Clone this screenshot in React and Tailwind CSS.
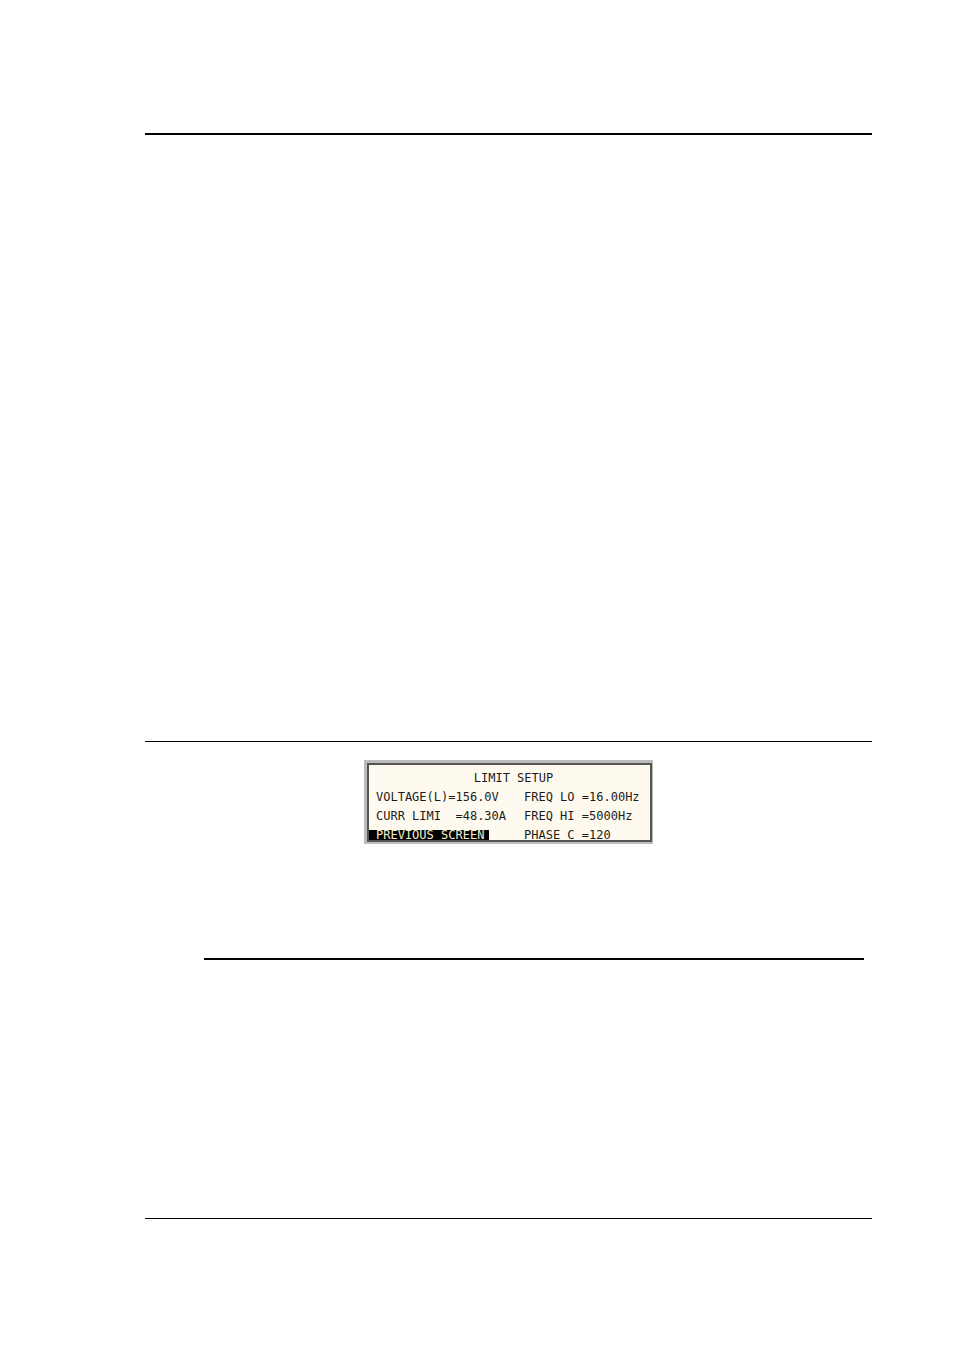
const rows = [
  ["VOLTAGE(L)=156.0V", "FREQ LO =16.00Hz"],
  ["CURR LIMI  =48.30A", "FREQ HI =5000Hz"],
];

function LimitSetup() {
  return (
    <section
      aria-labelledby="limit-title"
      className="mx-auto mt-[18px] w-[289px] bg-[#bbbcbb] pt-[3px] pr-px pb-[2px] pl-[3px] font-['DejaVu_Sans_Mono','Liberation_Mono',monospace] text-[12px] whitespace-pre text-[#1c1c1a]"
    >
      <div className="border-2 border-[#555653] bg-[#fffaf0] pt-1">
        <h1 id="limit-title" className="pl-2 text-center leading-[19px]">LIMIT SETUP</h1>
        {rows.map(([left, right]) => (
          <div key={left} className="flex leading-[19px]">
            <span className="w-[155px] shrink-0 pl-[7px]">{left}</span>
            <span>{right}</span>
          </div>
        ))}
        <div className="mt-1 flex h-[10px] leading-[10px]">
          <div className="w-[155px] shrink-0">
            <button type="button" className="block h-[10px] w-[120px] bg-black pl-[7px] text-left text-[#f4f0cc]">
              PREVIOUS SCREEN
            </button>
          </div>
          <span>PHASE C =120</span>
        </div>
      </div>
    </section>
  );
}

export default function App() {
  return (
    <main className="min-h-screen bg-white pt-[133px] pr-[82px] pb-[132px] pl-[145px]">
      <hr className="border-t-2 border-black" />
      <hr className="mt-[606px] border-t border-black" />
      <LimitSetup />
      <hr className="mt-[114px] mr-2 ml-[59px] border-t-2 border-black" />
      <hr className="mt-[258px] border-t border-black" />
    </main>
  );
}
